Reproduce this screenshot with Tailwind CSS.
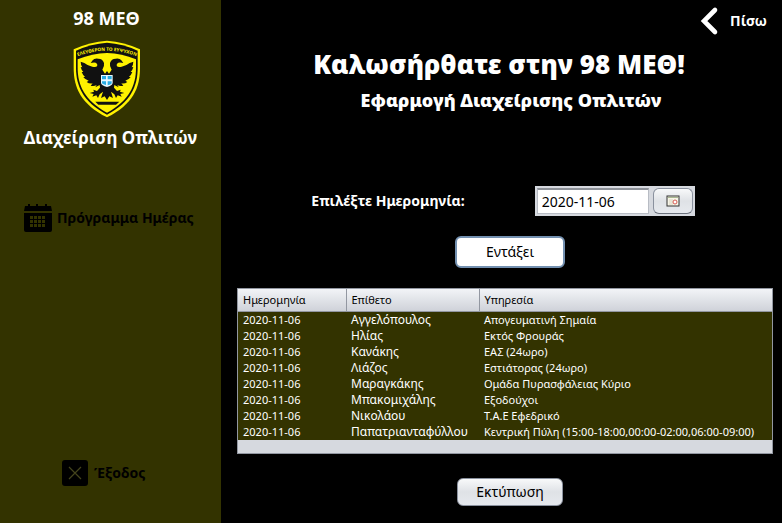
<!DOCTYPE html>
<html lang="el">
<head>
<meta charset="utf-8">
<meta name="viewport" content="width=device-width, initial-scale=1">
<title>98 ΜΕΘ - Διαχείριση Οπλιτών</title>
<script src="https://cdn.jsdelivr.net/npm/@tailwindcss/browser@4"></script>
</head>
<body class="flex min-h-screen bg-black font-['Noto_Sans','Open_Sans',sans-serif] text-white">
<aside class="flex w-[221px] shrink-0 flex-col items-center bg-[#333300] pt-1.5">
  <div class="flex flex-col items-center pr-2">
    <p class="text-lg leading-6 font-bold">98 ΜΕΘ</p>
    <svg class="mt-2.5 h-[78px] w-[68px]" viewBox="38 121 204 234" role="img" aria-label="Έμβλημα">
      <path d="M140 123Q191 126 239 149V204C239 265 218 313 140 353C62 313 40 265 40 204V149Q89 126 140 123Z" fill="#fff200"/>
      <path d="M140 129Q188 132 232 153V204C232 260 211 307 140 345C69 307 47 260 47 204V153Q92 132 140 129Z" fill="#111"/>
      <path d="M140 160Q184 161 227 179V204C227 257 207 302 140 339C73 302 52 257 52 204V179Q96 161 140 160Z" fill="#fff200"/>
      <path id="motto" d="M54 169Q140 138 226 169" fill="none"/>
      <text class="font-['Noto_Sans',sans-serif] font-bold" font-size="14" fill="#fff200" text-anchor="middle"><textPath href="#motto" startOffset="50%">ΕΛΕΥΘΕΡΟΝ ΤΟ ΕΥΨΥΧΟΝ</textPath></text>
      <g fill="#111">
        <path id="wing" d="M140 214L134 222L126 210Q133 200 131 190Q127 177 114 177Q102 175 97 182L91 190Q99 188 106 189Q113 193 110 200Q106 204 96 201Q80 197 72 190L61 186Q61 195 66 203L61 202Q63 211 69 217L64 217Q67 226 74 231L69 233Q76 241 85 243L79 247Q87 253 97 251L91 258Q101 261 109 256L105 263L118 256L119 264L110 274L99 270L101 276L88 280L100 283L96 291L108 287L113 295L118 284L128 276L122 295L133 290L140 301Z"/>
        <use href="#wing" transform="matrix(-1 0 0 1 280 0)"/>
        <path d="M105 306H177L167 315H114Z"/>
      </g>
      <path d="M122 226H157V250Q156 258 140 262Q123 258 122 250Z" fill="#e8f8ff"/>
      <path d="M125 229h12v10h-12zM142 229h12v10h-12zM125 245h12v11q-12-3-12-6zM142 245h12v5q0 4-12 7z" fill="#29abe2"/>
    </svg>
  </div>
  <h2 class="mt-2 text-[17px] leading-6 font-bold">Διαχείριση Οπλιτών</h2>
  <nav class="flex w-full flex-1 flex-col items-start pt-[54px] pb-[37px] text-sm leading-5 font-bold text-black">
    <a href="#" class="ml-6 flex items-center gap-[5px]">
      <svg class="size-7" viewBox="0 0 28 28" aria-hidden="true">
        <path d="M1 2H4V0H6V2H12V0H14V2H21V0H23V2H27L28 7H0ZM0 9H28V26Q28 28 26 28H2Q0 28 0 26Z"/>
        <path d="M6 12h3v3h-3zM10 12h3v3h-3zM14 12h3v3h-3zM18 12h3v3h-3zM6 16h3v3h-3zM10 16h3v3h-3zM14 16h3v3h-3zM18 16h3v3h-3zM6 20h3v3h-3zM10 20h3v3h-3zM14 20h3v3h-3zM18 20h3v3h-3z" fill="#333300"/>
      </svg>
      <span>Πρόγραμμα Ημέρας</span>
    </a>
    <a href="#" class="mt-auto ml-[62px] flex items-center gap-1.5">
      <svg class="size-[26px]" viewBox="0 0 26 26" aria-hidden="true">
        <rect width="26" height="26" rx="3"/>
        <path d="M7 7L19 19M19 7L7 19" fill="none" stroke="#44441c" stroke-width="1.2"/>
      </svg>
      <span>Έξοδος</span>
    </a>
  </nav>
</aside>
<main class="flex min-w-0 flex-1 flex-col pt-1.5 pr-[9px] pl-4">
  <a href="#" class="mr-1.5 flex items-center gap-2.5 self-end text-sm leading-5 font-bold">
    <svg class="h-[30px] w-5" viewBox="0 0 20 30" aria-hidden="true">
      <path d="M15 4L4 15L15 26" fill="none" stroke="#fff" stroke-width="4.6" stroke-linecap="round"/>
    </svg>
    <span>Πίσω</span>
  </a>
  <header class="pt-3 pr-3 text-center font-black">
    <h1 class="text-[26px] leading-8">Καλωσήρθατε στην 98 ΜΕΘ!</h1>
    <p class="mt-2 pl-6 text-lg leading-6">Εφαρμογή Διαχείρισης Οπλιτών</p>
  </header>
  <form class="mt-[74px]">
    <div class="flex items-center justify-center gap-[70px] pr-1">
      <label for="date" class="text-sm leading-5 font-bold">Επιλέξτε Ημερομηνία:</label>
      <div class="flex h-[30px] w-40 items-stretch gap-1 bg-[#d6d9df] p-0.5">
        <input id="date" type="text" value="2020-11-06" class="min-w-0 flex-1 border border-t-2 border-[#b8bcc4] border-t-[#8d9198] bg-white px-1 text-sm text-black outline-none">
        <button type="button" aria-label="Ημερολόγιο" class="flex w-10 items-center justify-center rounded-md border border-[#8a919e] border-b-[#6b717c] bg-linear-to-b from-[#f8f9fa] via-[#dfe2e6] to-[#e6e9ee]">
          <svg class="h-3 w-3.5" viewBox="0 0 14 12" aria-hidden="true">
            <rect x="1" y="1" width="12" height="10" fill="#f7f5e8" stroke="#333"/>
            <path d="M2 2.5h10" stroke="#a8b890"/>
            <path d="M3 5h2M3 7h2M3 9h2M6 4v6" stroke="#d8d3c0"/>
            <circle cx="9" cy="7" r="2" fill="#fff" stroke="#d65a50"/>
          </svg>
        </button>
      </div>
    </div>
    <div class="mt-5 flex justify-center pl-2.5">
      <button type="button" class="h-8 w-[110px] rounded-md border-2 border-[#7390b0] bg-white text-sm text-black">Εντάξει</button>
    </div>
  </form>
  <div class="mt-5 border border-[#9297a1] bg-[#d6d9df] pb-[13px]">
    <table class="w-full table-fixed border-collapse bg-[#333300] text-left text-xs leading-4">
      <colgroup><col class="w-[108px]"><col class="w-[133px]"><col></colgroup>
      <thead class="bg-linear-to-b from-[#f2f4f7] to-[#cfd2d9] text-[11px] text-black">
        <tr class="h-[22px] border-b border-[#9297a1]">
          <th class="border-r border-[#9297a1] px-[5px] font-normal">Ημερομηνία</th>
          <th class="border-r border-[#9297a1] px-[5px] font-normal">Επίθετο</th>
          <th class="px-[5px] font-normal">Υπηρεσία</th>
        </tr>
      </thead>
      <tbody class="whitespace-nowrap">
        <tr><td class="px-[5px] text-[11px]">2020-11-06</td><td class="px-[5px]">Αγγελόπουλος</td><td class="px-[5px] text-[11px]">Απογευματινή Σημαία</td></tr>
        <tr><td class="px-[5px] text-[11px]">2020-11-06</td><td class="px-[5px]">Ηλίας</td><td class="px-[5px] text-[11px]">Εκτός Φρουράς</td></tr>
        <tr><td class="px-[5px] text-[11px]">2020-11-06</td><td class="px-[5px]">Κανάκης</td><td class="px-[5px] text-[11px]">ΕΑΣ (24ωρο)</td></tr>
        <tr><td class="px-[5px] text-[11px]">2020-11-06</td><td class="px-[5px]">Λιάζος</td><td class="px-[5px] text-[11px]">Εστιάτορας (24ωρο)</td></tr>
        <tr><td class="px-[5px] text-[11px]">2020-11-06</td><td class="px-[5px]">Μαραγκάκης</td><td class="px-[5px] text-[11px]">Ομάδα Πυρασφάλειας Κύριο</td></tr>
        <tr><td class="px-[5px] text-[11px]">2020-11-06</td><td class="px-[5px]">Μπακομιχάλης</td><td class="px-[5px] text-[11px]">Εξοδούχοι</td></tr>
        <tr><td class="px-[5px] text-[11px]">2020-11-06</td><td class="px-[5px]">Νικολάου</td><td class="px-[5px] text-[11px]">Τ.Α.Ε Εφεδρικό</td></tr>
        <tr><td class="px-[5px] text-[11px]">2020-11-06</td><td class="px-[5px]">Παπατριανταφύλλου</td><td class="px-[5px] text-[11px]">Κεντρική Πύλη (15:00-18:00,00:00-02:00,06:00-09:00)</td></tr>
      </tbody>
    </table>
  </div>
  <div class="mt-6 flex justify-center pb-4 pl-2.5">
    <button type="button" class="h-7 w-[106px] rounded-md border border-[#8a919e] bg-linear-to-b from-[#f8f9fa] via-[#dfe2e6] to-[#e6e9ee] text-sm text-black">Εκτύπωση</button>
  </div>
</main>
</body>
</html>
